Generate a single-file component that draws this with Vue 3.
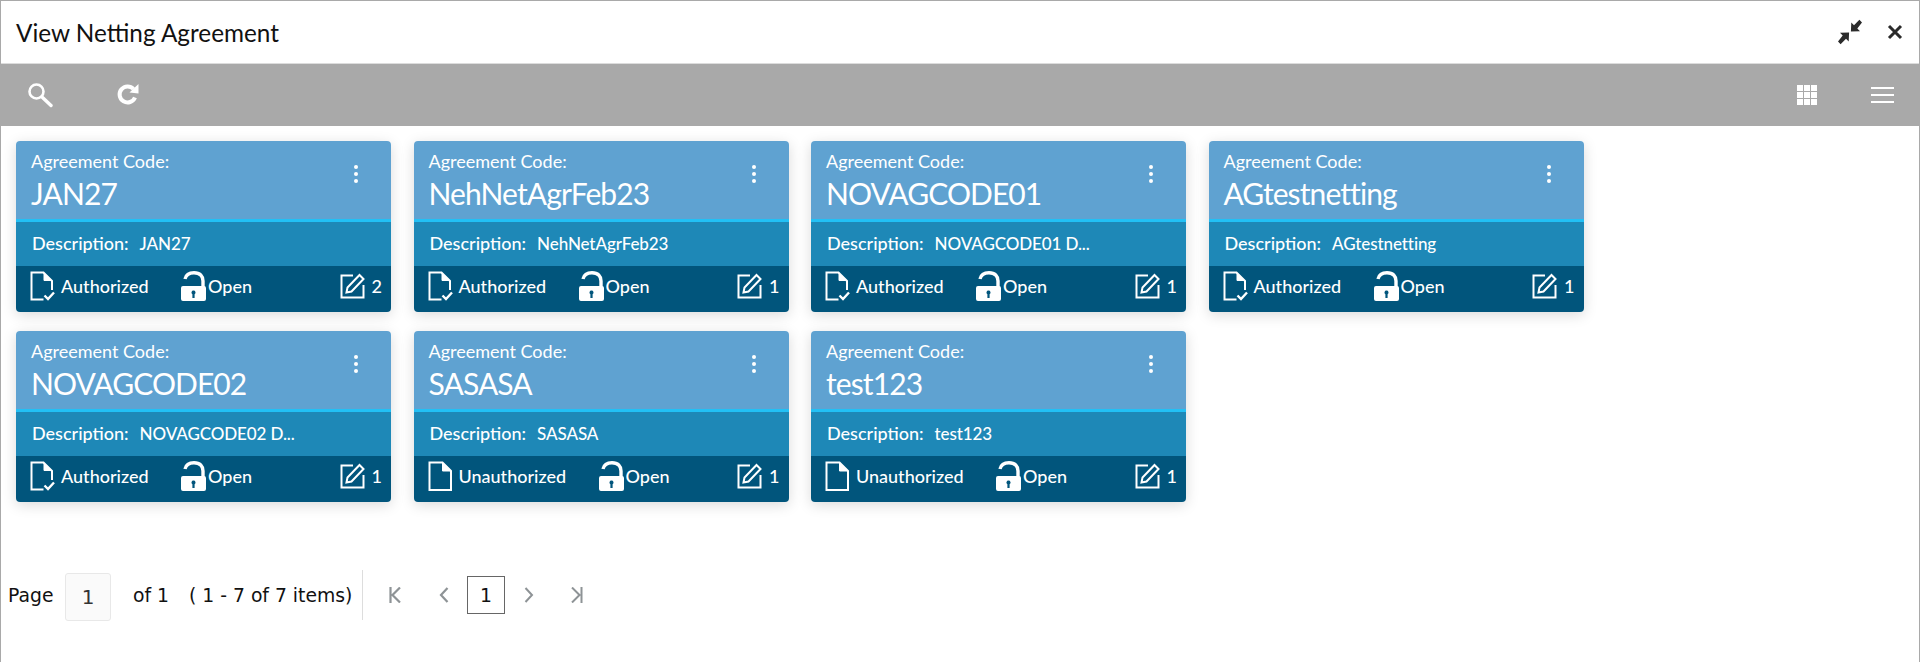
<script setup>
const cards = [
  { code: 'JAN27', desc: 'JAN27', auth: true, n: 2 },
  { code: 'NehNetAgrFeb23', desc: 'NehNetAgrFeb23', auth: true, n: 1 },
  { code: 'NOVAGCODE01', desc: 'NOVAGCODE01 D...', auth: true, n: 1 },
  { code: 'AGtestnetting', desc: 'AGtestnetting', auth: true, n: 1 },
  { code: 'NOVAGCODE02', desc: 'NOVAGCODE02 D...', auth: true, n: 1 },
  { code: 'SASASA', desc: 'SASASA', auth: false, n: 1 },
  { code: 'test123', desc: 'test123', auth: false, n: 1 },
]
</script>

<template>
  <div class="win">
    <header class="head">
      <h1 class="title">View Netting Agreement</h1>
      <div class="head-icons">
        <svg class="ic-min" viewBox="0 0 26 26" width="26" height="26">
          <path fill="#2b2b2b" d="M25 3.400 22.400.8l-5.400 5.400-2.700-2.700-.4 9.100 9.100-.4-2.700-2.700zM1 22.600l2.600 2.600 5.400-5.400 2.700 2.700.4-9.100-9.100.4 2.700 2.700z"/>
        </svg>
        <svg class="ic-close" viewBox="0 0 16 16" width="16" height="16">
          <path stroke="#2b2b2b" stroke-width="3" d="M2 2l12 12M14 2 2 14"/>
        </svg>
      </div>
    </header>
    <div class="bar">
      <div class="bar-left">
        <svg viewBox="0 0 26 26" width="26" height="26" fill="none" stroke="#fff">
          <circle cx="9.500" cy="9.500" r="7" stroke-width="2.600"/>
          <path d="M15 15l9 8.500" stroke-width="3.400" stroke-linecap="round"/>
        </svg>
        <svg viewBox="0 0 24 24" width="24" height="24" class="refresh" fill="none" stroke="#fff">
          <path d="M19 14.500A8 8 0 1 1 17.500 6" stroke-width="4"/>
          <path d="M13.500 9.500 22.500 10.500V1z" fill="#fff" stroke="none"/>
        </svg>
      </div>
      <div class="bar-right">
        <div class="grid-ic"><i v-for="i in 9" :key="i"></i></div>
        <div class="menu-ic"><i></i><i></i><i></i></div>
      </div>
    </div>
    <main class="cards">
      <article v-for="c in cards" :key="c.code" class="card">
        <div class="c-top">
          <div>
            <div class="c-label">Agreement Code:</div>
            <div class="c-code">{{ c.code }}</div>
          </div>
          <div class="dots"><i></i><i></i><i></i></div>
        </div>
        <div class="c-desc"><span>Description:</span><span class="c-val">{{ c.desc }}</span></div>
        <div class="c-foot">
          <svg class="doc" viewBox="0 0 24 30" width="24" height="30" fill="none" stroke="#fff" stroke-width="2">
            <template v-if="c.auth">
              <path d="M13.500 28.500H1.500V1.500H13.500L22 10V19"/>
              <path d="M14 2V9.500H21.500z" fill="#fff" stroke-width="1"/>
              <path d="M14.500 24.500l3.500 3.500 6-6.500" stroke-width="2.400"/>
            </template>
            <template v-else>
              <path d="M1.500 29V1.500H14.500L23 10V29z"/>
              <path d="M14.500 2V10H22.500z" fill="#fff" stroke-width="1"/>
            </template>
          </svg>
          <span class="status" :class="{ un: !c.auth }">{{ c.auth ? 'Authorized' : 'Unauthorized' }}</span>
          <svg class="lock" viewBox="0 0 26 30" width="26" height="30">
            <path d="M4 8C5 3.500 8 1.700 13 1.700C19 1.700 22 5 22 10V16" fill="none" stroke="#fff" stroke-width="3.400"/>
            <path fill="#fff" fill-rule="evenodd" d="M2 15h21a2 2 0 0 1 2 2v11a2 2 0 0 1-2 2H2a2 2 0 0 1-2-2V17a2 2 0 0 1 2-2zm10.500 4.500a2 2 0 0 0-1.100 3.700V27h2.200v-3.800a2 2 0 0 0-1.100-3.700z"/>
          </svg>
          <span class="open">Open</span>
          <svg class="edit" viewBox="0 0 26 26" width="26" height="26" fill="none" stroke="#fff" stroke-width="2">
            <path d="M13 2.500H1.500v22h22V12"/>
            <path d="M6.500 19.500l1-5L19.500 2l4 4-12 12.500z"/>
          </svg>
          <span class="num">{{ c.n }}</span>
        </div>
      </article>
    </main>
    <footer class="pager">
      <span class="p-label">Page</span>
      <span class="p-input">1</span>
      <span class="p-of">of 1</span>
      <span class="p-items">( 1 - 7 of 7 items)</span>
      <span class="p-sep"></span>
      <svg class="p-ic first" viewBox="0 0 12 16" width="12" height="16" fill="none" stroke="#8e9396" stroke-width="2.200">
        <path d="M1.500 0v16M11 .5 3.500 8l7.500 7.500"/>
      </svg>
      <svg class="p-ic prev" viewBox="0 0 10 16" width="10" height="16" fill="none" stroke="#8e9396" stroke-width="2.200">
        <path d="M8.500 1 2 8l6.500 7"/>
      </svg>
      <span class="p-cur">1</span>
      <svg class="p-ic next" viewBox="0 0 10 16" width="10" height="16" fill="none" stroke="#8e9396" stroke-width="2">
        <path d="M1.500 1 8 8l-6.500 7"/>
      </svg>
      <svg class="p-ic last" viewBox="0 0 12 16" width="12" height="16" fill="none" stroke="#8e9396" stroke-width="2">
        <path d="M10.500 0v16M1 .5 8.500 8 1 15.500"/>
      </svg>
    </footer>
  </div>
</template>

<style>
html, body { margin: 0; background: #fff; }
</style>

<style scoped>
.win {
  box-sizing: border-box;
  height: 662px;
  border: 1px solid #a9a9a9;
  border-bottom: 0;
  background: #fff;
  color: #111;
  font-family: "Lato", "Open Sans", sans-serif;
  overflow: hidden;
}
.head {
  height: 62px;
  border-bottom: 1px solid #dcdcdc;
  display: flex;
  align-items: center;
  justify-content: space-between;
  padding: 0 16px 0 15px;
}
.title { margin: 0; font-size: 24.300px; font-weight: 400; }
.head-icons { display: flex; align-items: center; gap: 24px; }
.bar {
  height: 62px;
  background: #a9a9a9;
  display: flex;
  align-items: center;
  justify-content: space-between;
  padding: 0 25px 0 26px;
}
.bar-left { display: flex; align-items: center; gap: 63px; }
.bar-right { display: flex; align-items: center; gap: 54px; }
.grid-ic { display: grid; grid-template-columns: repeat(3, 6px); grid-auto-rows: 6px; gap: 1px; }
.grid-ic i { background: #fff; }
.menu-ic { display: flex; flex-direction: column; gap: 5px; width: 23px; }
.menu-ic i { height: 2px; background: #fff; }
.cards {
  display: flex;
  flex-wrap: wrap;
  gap: 19.500px 22.500px;
  padding: 15px 15px 0;
  min-height: 424px;
  align-content: flex-start;
}
.card {
  width: 375px;
  height: 170.500px;
  border-radius: 4px;
  overflow: hidden;
  box-shadow: 0 3px 14px rgba(0,0,0,.15);
  color: #fff;
  display: flex;
  flex-direction: column;
}
.c-top {
  height: 78px;
  background: #5fa2d1;
  border-bottom: 3px solid #22c0f5;
  display: flex;
  justify-content: space-between;
  padding: 0 33px 0 15px;
}
.c-label { font-size: 18px; margin-top: 9px; line-height: 22px; }
.c-code { font-size: 30px; line-height: 40px; margin-top: 1px; letter-spacing: -.9px; }
.dots { display: flex; flex-direction: column; gap: 3px; margin-top: 24px; }
.dots i { width: 4px; height: 4px; border-radius: 50%; background: #fff; }
.c-desc {
  height: 44px;
  background: #1e88b7;
  display: flex;
  align-items: center;
  gap: 11px;
  padding: 0 0 2px 16px;
  box-sizing: border-box;
  font-size: 18px;
  font-weight: 500;
}
.c-val { font-size: 17px; letter-spacing: -.1px; }
.c-foot {
  flex: 1;
  background: #01557c;
  display: flex;
  align-items: center;
  padding: 0 9px 6px 14px;
  font-size: 18px;
  font-weight: 500;
}
.doc, .lock, .edit { flex: none; overflow: visible; }
.status { margin-left: 7px; width: 120px; }
.status.un { width: 140px; }
.open { margin-left: 1px; flex: 1; }
.num { margin-left: 6px; }
.pager {
  display: flex;
  align-items: center;
  height: 60px;
  padding-left: 7px;
  font-family: "DejaVu Sans", sans-serif;
  font-size: 18.800px;
  white-space: nowrap;
}
.p-label { width: 57px; }
.p-input {
  box-sizing: border-box;
  width: 46px;
  height: 48px;
  margin-top: 4px;
  border: 1px solid #e8e8e8;
  border-radius: 3px;
  background: #fafafa;
  display: flex;
  align-items: center;
  justify-content: center;
  color: #333;
  font-size: 20px;
}
.p-of { margin-left: 22px; width: 56px; }
.p-items { width: 173px; }
.p-sep { width: 1px; height: 50px; background: #ddd; }
.p-ic { flex: none; }
.first { margin-left: 26px; }
.prev { margin-left: 38px; }
.p-cur {
  box-sizing: border-box;
  margin-left: 18px;
  width: 38px;
  height: 38px;
  border: 1px solid #666;
  display: flex;
  align-items: center;
  justify-content: center;
}
.next { margin-left: 19px; }
.last { margin-left: 37px; }
.ic-min, .ic-close { display: block; }
</style>
